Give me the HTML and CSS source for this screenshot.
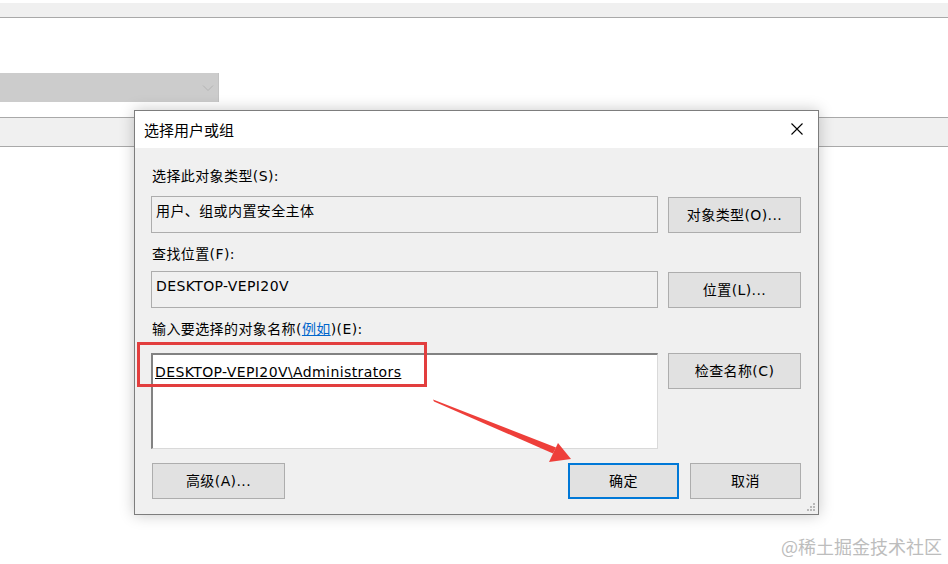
FILE: index.html
```html
<!DOCTYPE html>
<html lang="zh-CN">
<head>
	<meta charset="UTF-8">
	<title>选择用户或组</title>
	<link rel="stylesheet" href="styles.css">
</head>
<body>
	<div class="page">
		<div class="tabbar"></div>
		<div class="select">
			<svg class="chevron" width="12" height="8" viewBox="0 0 12 8"><path d="M1 1.5 L6 6.5 L11 1.5" fill="none" stroke="#b4b4b4" stroke-width="1"/></svg>
		</div>
		<div class="band"></div>
	</div>

	<section class="dialog">
		<header class="dialog-title">
			<span>选择用户或组</span>
			<svg class="close" width="12" height="12" viewBox="0 0 12 12"><path d="M0.5 0.5 L11.5 11.5 M11.5 0.5 L0.5 11.5" stroke="#000" stroke-width="1.1"/></svg>
		</header>
		<div class="dialog-body">
			<p class="label l1">选择此对象类型(S):</p>
			<div class="row">
				<div class="field">用户、组或内置安全主体</div>
				<button class="btn">对象类型(O)...</button>
			</div>

			<p class="label l2">查找位置(F):</p>
			<div class="row">
				<div class="field">DESKTOP-VEPI20V</div>
				<button class="btn">位置(L)...</button>
			</div>

			<p class="label l3">输入要选择的对象名称(<a href="#">例如</a>)(E):</p>
			<div class="row">
				<div class="names"><u>DESKTOP-VEPI20V\Administrators</u></div>
				<button class="btn">检查名称(C)</button>
			</div>

			<div class="actions">
				<button class="btn advanced">高级(A)...</button>
				<div class="actions-right">
					<button class="btn small default">确定</button>
					<button class="btn small">取消</button>
				</div>
			</div>
		</div>
		<svg class="grip" width="10" height="10" viewBox="0 0 10 10">
			<g fill="#b8b8b8">
				<rect x="7" y="1" width="2" height="2"/>
				<rect x="4" y="4" width="2" height="2"/><rect x="7" y="4" width="2" height="2"/>
				<rect x="1" y="7" width="2" height="2"/><rect x="4" y="7" width="2" height="2"/><rect x="7" y="7" width="2" height="2"/>
			</g>
		</svg>
	</section>

	<!-- annotations -->
	<div class="mark"></div>
	<svg class="arrow" width="948" height="564" viewBox="0 0 948 564">
		<polygon fill="#ee3f3a" points="433,399.5 434,401.5 553,453.5 556,447.5"/>
		<polygon fill="#ee3f3a" points="571,459 558,443 549,462"/>
	</svg>

	<div class="watermark">@稀土掘金技术社区</div>
</body>
</html>
```

FILE: styles.css
```css
html{
	box-sizing: border-box;
	font-family: "DejaVu Sans", "Noto Sans CJK SC", sans-serif;
	font-size: 14px;
}
*,
*:before,
*:after{
	box-sizing: inherit;
}

body{
	margin: 0;
	width: 948px;
	height: 564px;
	overflow: hidden;
	position: relative;
	background-color: #fff;
	color: #000;
}

/* page behind the dialog */
.page{
	padding-top: 3px;
}
.tabbar{
	height: 15px;
	background-color: #f0f0f0;
	border-bottom: 1px solid #a9a9a9;
}
.select{
	margin-top: 55px;
	width: 219px;
	height: 29px;
	background-color: #cccccc;
	border-right: 1px solid #c2c2c2;
	display: flex;
	justify-content: flex-end;
	align-items: center;
	padding-right: 4px;
}
.band{
	margin-top: 15px;
	height: 30px;
	background-color: #f0f0f0;
	border-top: 1px solid #a9a9a9;
	border-bottom: 1px solid #a9a9a9;
}

/* dialog window */
.dialog{
	position: absolute;
	left: 134px;
	top: 110px;
	width: 685px;
	height: 405px;
	background-color: #f0f0f0;
	border: 1px solid #7d7d7d;
	box-shadow: 0 0 14px rgba(0,0,0,.22);
	display: flex;
	flex-direction: column;
}
.dialog-title{
	height: 37px;
	background-color: #fff;
	display: flex;
	justify-content: space-between;
	align-items: center;
	padding: 0 15px 0 9px;
	font-size: 15px;
	font-family: "Noto Sans CJK SC", sans-serif;
}
.dialog-title span{
	margin-top: -1px;
}
.close{
	margin-top: -2px;
}
.dialog-body{
	flex-grow: 1;
	padding: 18px 17px 0 16px;
	letter-spacing: .4px;
}

.label{
	margin: 0;
	height: 20px;
	line-height: 20px;
	padding-left: 1px;
}
.l1{ margin-bottom: 10px; }
.l2{ margin-top: 11px; margin-bottom: 7px; }
.l3{ margin-top: 11px; margin-bottom: 14px; }
.label a{
	color: #0066cc;
}

.row{
	display: flex;
	gap: 10px;
	align-items: flex-start;
}
.field{
	width: 507px;
	height: 37px;
	border: 1px solid #adadad;
	background-color: #f0f0f0;
	padding: 4px 4px 0 4px;
	line-height: 20px;
}
.names{
	width: 507px;
	height: 96px;
	background-color: #fff;
	border-top: 2px solid #828282;
	border-left: 2px solid #828282;
	border-right: 1px solid #d9d9d9;
	border-bottom: 1px solid #d9d9d9;
	padding: 7px 0 0 2px;
	line-height: 20px;
}

.btn{
	font-family: inherit;
	font-size: 14px;
	letter-spacing: inherit;
	color: #000;
	width: 133px;
	height: 36px;
	margin: 1px 0 0 0;
	padding: 0;
	background-color: #e1e1e1;
	border: 1px solid #adadad;
	line-height: 20px;
}
.row .names + .btn{
	margin-top: 0;
}
.btn.small{
	width: 111px;
	height: 36px;
}
.btn.default{
	border: 2px solid #0078d7;
}

.actions{
	margin-top: 14px;
	display: flex;
	justify-content: space-between;
}
.actions .btn{
	margin-top: 0;
	height: 36px;
}
.actions .advanced{
	margin-left: 1px;
}
.actions-right{
	display: flex;
	gap: 11px;
}

.grip{
	position: absolute;
	right: 2px;
	bottom: 2px;
}

/* red annotations */
.mark{
	position: absolute;
	left: 137px;
	top: 342px;
	width: 290px;
	height: 45px;
	border: 3px solid #e23e3e;
}
.arrow{
	position: absolute;
	left: 0;
	top: 0;
	pointer-events: none;
}

.watermark{
	position: absolute;
	left: 781px;
	top: 534px;
	font-size: 18px;
	line-height: 24px;
	color: #bdbdbd;
	font-family: "Noto Sans CJK SC", sans-serif;
}
```
